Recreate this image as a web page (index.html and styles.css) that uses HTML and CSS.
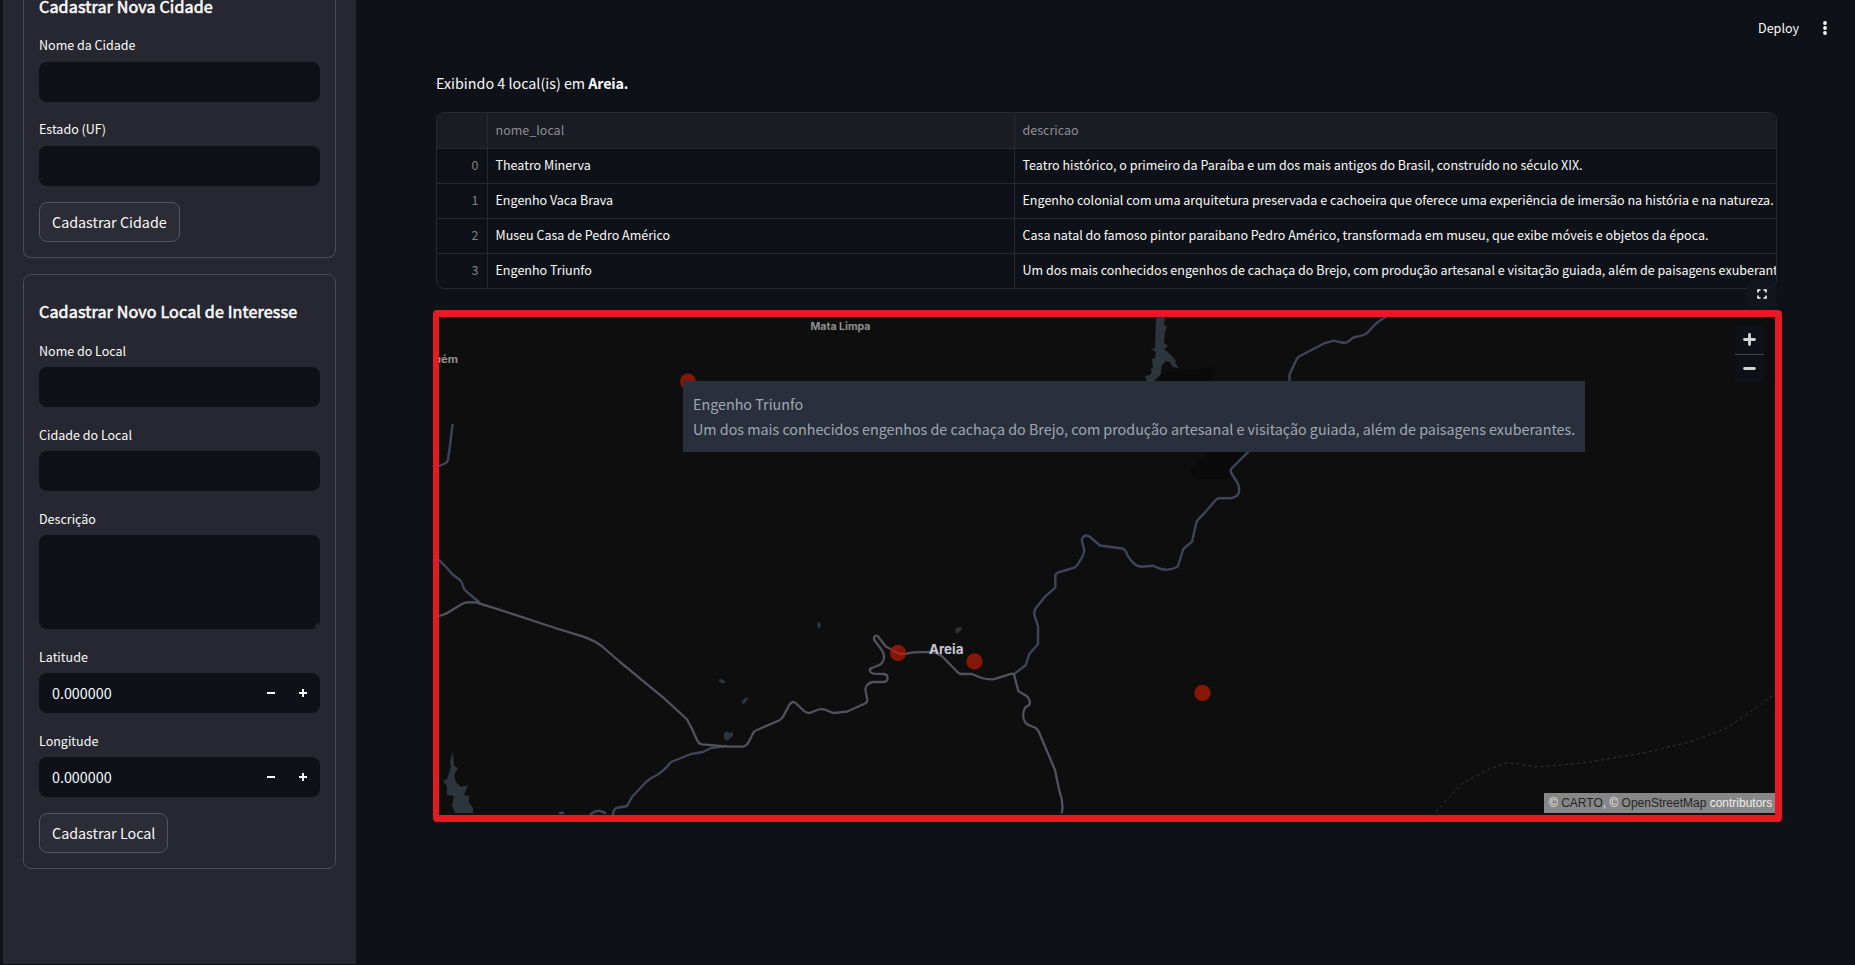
FILE: index.html
```html
<!DOCTYPE html>
<html lang="pt-BR">
<head>
<meta charset="utf-8">
<title>Locais</title>
<link rel="stylesheet" href="styles.css">
</head>
<body>
<div class="app">
  <aside class="sidebar">
    <form class="form form-city">
      <h3 class="form-title">Cadastrar Nova Cidade</h3>
      <div class="field"><label class="label">Nome da Cidade</label><div class="input"></div></div>
      <div class="field"><label class="label">Estado (UF)</label><div class="input"></div></div>
      <button type="button" class="btn">Cadastrar Cidade</button>
    </form>
    <form class="form form-place">
      <h3 class="form-title">Cadastrar Novo Local de Interesse</h3>
      <div class="field"><label class="label">Nome do Local</label><div class="input"></div></div>
      <div class="field"><label class="label">Cidade do Local</label><div class="input"></div></div>
      <div class="field"><label class="label">Descrição</label>
        <div class="input area"><svg class="grip" viewBox="0 0 6 6"><path d="M.5 5.5l5-5M3.5 5.500l2-2" stroke="#55575f" stroke-width=".8"/></svg></div></div>
      <div class="field"><label class="label">Latitude</label>
        <div class="input number"><span class="value">0.000000</span>
          <svg class="step" viewBox="0 0 8 8"><path d="M0 3h8v2H0z" fill="#fff"/></svg>
          <svg class="step" viewBox="0 0 8 8"><path d="M3 0h2v3h3v2H5v3H3V5H0V3h3z" fill="#fff"/></svg></div></div>
      <div class="field"><label class="label">Longitude</label>
        <div class="input number"><span class="value">0.000000</span>
          <svg class="step" viewBox="0 0 8 8"><path d="M0 3h8v2H0z" fill="#fff"/></svg>
          <svg class="step" viewBox="0 0 8 8"><path d="M3 0h2v3h3v2H5v3H3V5H0V3h3z" fill="#fff"/></svg></div></div>
      <button type="button" class="btn">Cadastrar Local</button>
    </form>
  </aside>
  <main class="main">
    <header class="toolbar">
      <span class="deploy">Deploy</span>
      <svg class="dots" viewBox="0 0 4 14"><circle cx="2" cy="2" r="1.9"/><circle cx="2" cy="7" r="1.9"/><circle cx="2" cy="12" r="1.9"/></svg>
    </header>
    <p class="summary">Exibindo 4 local(is) em <b>Areia.</b></p>
    <div class="grid">
      <div class="row head"><span class="idx"></span><span class="cell">nome_local</span><span class="cell">descricao</span></div>
      <div class="row"><span class="idx">0</span><span class="cell">Theatro Minerva</span><span class="cell">Teatro histórico, o primeiro da Paraíba e um dos mais antigos do Brasil, construído no século XIX.</span></div>
      <div class="row"><span class="idx">1</span><span class="cell">Engenho Vaca Brava</span><span class="cell">Engenho colonial com uma arquitetura preservada e cachoeira que oferece uma experiência de imersão na história e na natureza.</span></div>
      <div class="row"><span class="idx">2</span><span class="cell">Museu Casa de Pedro Américo</span><span class="cell">Casa natal do famoso pintor paraibano Pedro Américo, transformada em museu, que exibe móveis e objetos da época.</span></div>
      <div class="row"><span class="idx">3</span><span class="cell">Engenho Triunfo</span><span class="cell">Um dos mais conhecidos engenhos de cachaça do Brejo, com produção artesanal e visitação guiada, além de paisagens exuberantes.</span></div>
    </div>
    <section class="map">
      <svg class="canvas" viewBox="439 317 1336 498" width="1336" height="498">
        <path fill="#0e0e0e" d="M439 317h1336v496H439z"/>
        <path fill="#0a0a0a" d="M1160 374l52-7 2 16h-54zM1209 450l-20 20 6 9h38l-2-10 17-19z"/>
        <g fill="#2c353c">
          <path d="M1156 317h9l-1 8 3 1-2 6-1 11 4 3-4 3 8 7 4 5-1 2 4 5-6-1-3-5-4-1-4 4-1 5v4l-7 7h-7l-2-5 5-1 2-3-2-3 3-1-1-9 3-1 1-6-5-3 4-1z"/>
          <path d="M453 752l1 14 4 2-4 7 2 7 5 5 7-2-4 10 5 1v6l4 6v5h-18l-3-8 2-9-7-1v-9l-4-5 4-2 4-12-1-6z"/>
          <path d="M718 680l3-1 4 2v2h-4z"/><path d="M741 702l4-4 3-1v2l-4 5z"/><path d="M724 733l3-2 2 2 4-1v4l-3 2-2 3-4-2z"/>
          <path d="M817 623l2-1 2 2-1 4h-2z"/><path d="M955 629l4-2h2l1 2-4 4h-2z"/>
        </g>
        <g fill="none" stroke="#40445a" stroke-width="2.400" stroke-linejoin="round" stroke-linecap="round">
          <path d="M439 466l6-2.500q2.500-1 3-4l2-14 2.500-20.500"/>
          <path d="M438 559l9 9 5 6 8 6q2 2 3 6 1 4 4 6l12 10"/>
          <path d="M1387 316L1381.500 319.500 1376 323.500 1366.700 333.300Q1364 335 1361.700 335.700L1353.500 337.500 1347.500 342Q1345 343.500 1342 342.500L1333.500 340.700 1323.500 343.700 1300 356Q1297.500 357.500 1296.500 359.500L1289.500 374.500 1289.500 380 1294 410 1282 425 1247.700 452.300 1231.500 468.500Q1230 470.500 1231.200 473L1237.300 482.700Q1239 485.500 1239 488V492Q1238 497 1230.700 498.300H1219Q1217 498.500 1215.700 500L1206 511.300 1198.300 519.300Q1196.500 521.500 1196 524L1192 541.700 1183.300 549 1178 566Q1175 569 1166 569.700 1162 569.500 1160 568.700L1152.700 565.700 1141.700 566.700Q1137 566.500 1134.300 564 1130 560 1127.300 555 1126 549.500 1122 548.500L1100 545.500 1090 537Q1084 533 1081.700 540L1084.300 550Q1084 553 1082.700 556 1078 565 1075 567.300L1058 572.500Q1055.500 573.500 1055.300 576V587.700L1045 596.700 1035.500 608.500Q1033.500 613 1034.700 616L1038 626V644.300L1029.300 654 1025.700 665.300 1014 674"/>
          <path d="M613 814q1-5 3-6l11-2 5-9 13-14q5-5 12-8 8-5 14-13l20-8 12-2 8-4 15-2"/>
          <path d="M591 814q7-6 14-1M560 813h3"/>
        </g>
        <path fill="none" stroke="#52525f" stroke-width="2.300" stroke-linejoin="round" d="M438 616.500L446 613.700 462 604Q465 602.500 468 602.300H476L498.300 609.300 556.700 628.500 583.300 636.700Q594 640.500 601.700 646L620 662 663.300 697.700 686.700 719 691.700 728.300 697 740Q698.500 743.700 702 744.300L728.300 746.700H742Q746 746.500 748.300 742.700L753.500 732.500Q754.500 730.800 757 730L779 720.500Q782 719 783.500 716L789.500 704.500Q792 701 795 702.500L804 711Q807.500 714 811 712.500L818.300 709.500Q822 708.700 825 709.700L833.300 713 846.700 711.700 865 703.500Q867.500 702 867.300 700L865.500 690Q865 687 867.300 685 870 682 873.500 682H884Q887.500 681.500 887.500 678 887.500 674.500 884 674L873.300 673.700Q870.500 673 869.700 670.700 869.500 668.500 872 668L880 664.700Q884.500 661 884 656 883.500 652 881.700 650L874 639.500Q873.500 634.500 877.700 636L885.700 646.500 901.700 654.500 913.300 652.300 931.700 651.800Q937 653 941.700 656L958 672.500Q959.500 674 961.500 674H971.700L981.700 678Q987 679.500 993.300 679.300L1011.700 673.700 1014 674.500 1018.300 691 1027.300 696.500Q1031.500 702 1029 705L1025 707.700Q1021 716 1025.300 722.300 1027 725 1035 727.500 1037.500 729 1039 732.300L1055 770 1059.300 790.700Q1064 803 1061.700 813.300"/>
        <path fill="none" stroke="#2c363d" stroke-width="1" stroke-dasharray="3.200 2.900" d="M1436 812L1462 783.500 1488 770 1507.500 762.500 1537 767 1567 764.500 1590 762 1643 753 1690 742 1727 728 1775 694"/>
        <g fill="#851708">
          <circle cx="688" cy="381.500" r="8"/><circle cx="898" cy="653" r="8.200"/><circle cx="974.500" cy="661.500" r="8.200"/><circle cx="1202.500" cy="693" r="8.200"/>
        </g>
        <path d="M892 650l8 4h5" stroke="#9c2f26" stroke-width="2" fill="none"/>
        <g class="place">
          <text x="810.500" y="330" textLength="60" lengthAdjust="spacingAndGlyphs">Mata Limpa</text>
          <text x="434" y="363" textLength="24" lengthAdjust="spacingAndGlyphs">uém</text>
          <text class="town" x="929" y="653.500" textLength="34.500" lengthAdjust="spacingAndGlyphs">Areia</text>
        </g>
      </svg>
      <button type="button" class="full"><svg viewBox="0 0 10 10" width="10" height="10"><path d="M1 3.500V1h2.500M6.500 1H9v2.500M9 6.500V9H6.500M3.500 9H1V6.500" fill="none" stroke="#fafafa" stroke-width="1.600"/></svg></button>
      <div class="zoom">
        <svg viewBox="0 0 29 29"><path d="M14.500 9.500v10M9.500 14.500h10" stroke="#d4d5d6" stroke-width="2.800" stroke-linecap="round"/></svg>
        <svg viewBox="0 0 29 29"><path d="M9.500 14h10" stroke="#d4d5d6" stroke-width="3" stroke-linecap="round"/></svg>
      </div>
      <div class="tip"><div>Engenho Triunfo</div><div>Um dos mais conhecidos engenhos de cachaça do Brejo, com produção artesanal e visitação guiada, além de paisagens exuberantes.</div></div>
      <div class="credit">© <span>CARTO</span>, © <span>OpenStreetMap</span> contributors</div>
    </section>
  </main>
</div>
</body>
</html>
```
FILE: styles.css
```css
* { box-sizing: border-box; }
body {
  margin: 0;
  background: #0e1117;
  color: #fafafa;
  font: 14.320px/24px "Noto Sans CJK SC", "Noto Sans", sans-serif;
}
.app { display: flex; width: 1855px; height: 965px; overflow: hidden; border-left: 3px solid #101116; border-bottom: 1px solid #150e16; }
.sidebar { width: 353px; background: #262730; padding: 0 20px; flex: none; overflow: hidden; }
.form { display: flow-root; border: 1px solid #4c4d56; border-radius: 8px; padding: 0 15px; }
.form-city { height: 258px; border-top: 0; border-radius: 0 0 8px 8px; margin-bottom: 16px; }
.form-place { height: 595px; padding-top: 22px; }
.form-title { margin: 0 0 14px; font-size: 16.100px; line-height: 28px; font-weight: 400; letter-spacing: .14px; -webkit-text-stroke: .6px #fafafa; white-space: nowrap; }
.form-city .form-title { margin-top: -8px; }
.field { margin-bottom: 16px; padding-top: 1px; }
.label { display: block; font-size: 12.520px; line-height: 20px; height: 27px; }
.form-place .label { padding-top: 1px; }
.input { height: 40px; background: #0e1117; border-radius: 8px; }
.area { height: 94px; position: relative; }
.grip { position: absolute; right: 1px; bottom: 1px; width: 5px; height: 5px; }
.number { display: flex; align-items: center; padding: 0 13px; }
.value { flex: 1; line-height: 24px; padding-bottom: 1px; }
.step { width: 8px; height: 8px; margin-left: 24px; }
.btn { height: 40px; padding: 0 12px 1px; border: 1px solid #54555e; border-radius: 8px; background: #2b2c36; color: #fafafa; font: inherit; display: block; white-space: nowrap; }
.main { flex: 1; min-width: 0; padding: 0 75px 0 80px; display: flex; flex-direction: column; }
.toolbar { height: 60px; display: flex; justify-content: flex-end; align-items: center; margin-right: -47px; padding-bottom: 4px; font-size: 12.520px; flex: none; }
.dots { width: 4px; height: 14px; fill: #fafafa; margin-left: 24px; }
.summary { margin: 11px 0 17px; line-height: 24px; }
.summary b { letter-spacing: -.2px; }
.grid { border: 1px solid #262930; border-radius: 8px; height: 177px; width: 1341px; overflow: hidden; flex: none; }
.row { display: grid; grid-template-columns: 51px 527px 1fr; height: 35px; line-height: 32px; border-bottom: 1px solid #262930; font-size: 12.520px; white-space: nowrap; }
.row:last-child { border-bottom: 0; }
.head { background: #1a1c24; height: 36px; line-height: 34px; color: #8d8e93; }
.idx { text-align: right; padding-right: 8.500px; color: #7f8187; border-right: 1px solid #262930; }
.cell { padding-left: 7.500px; overflow: hidden; border-right: 1px solid #262930; }
.cell:last-child { border-right: 0; }
.map { position: relative; margin: 21px 0 0 -3px; width: 1349px; height: 512px; border: 7px solid #e31b22; border-left-width: 6px; border-radius: 4px; flex: none; }
.canvas { display: block; }
.place text { font: 700 11px Inter, sans-serif; fill: #8f8f8f; }
.place .town { font-size: 13px; fill: #c7c8d2; }
.full { position: absolute; right: -2px; top: -38px; width: 30px; height: 30px; border: 0; border-radius: 8px; background: #12151d; padding: 0; display: grid; place-items: center; }
.zoom { position: absolute; right: 11px; top: 8px; width: 29px; height: 58px; background: #0e1117; border-radius: 4px; display: grid; }
.zoom svg { width: 29px; height: 29px; }
.zoom svg + svg { border-top: 1px solid #44474d; }
.tip { position: absolute; left: 244px; top: 64px; width: 902px; height: 71px; padding: 10px; background: #29303b; color: #a0a7b4; line-height: 25px; white-space: nowrap; }
.tip div { height: 25px; }
.credit { position: absolute; right: 0; bottom: 2px; width: 231px; height: 20px; padding-left: 5px; background: #878787; color: #eee; font: 12px/20px "Liberation Sans", Arial, sans-serif; white-space: nowrap; }
.credit span { color: #262626; }
```
